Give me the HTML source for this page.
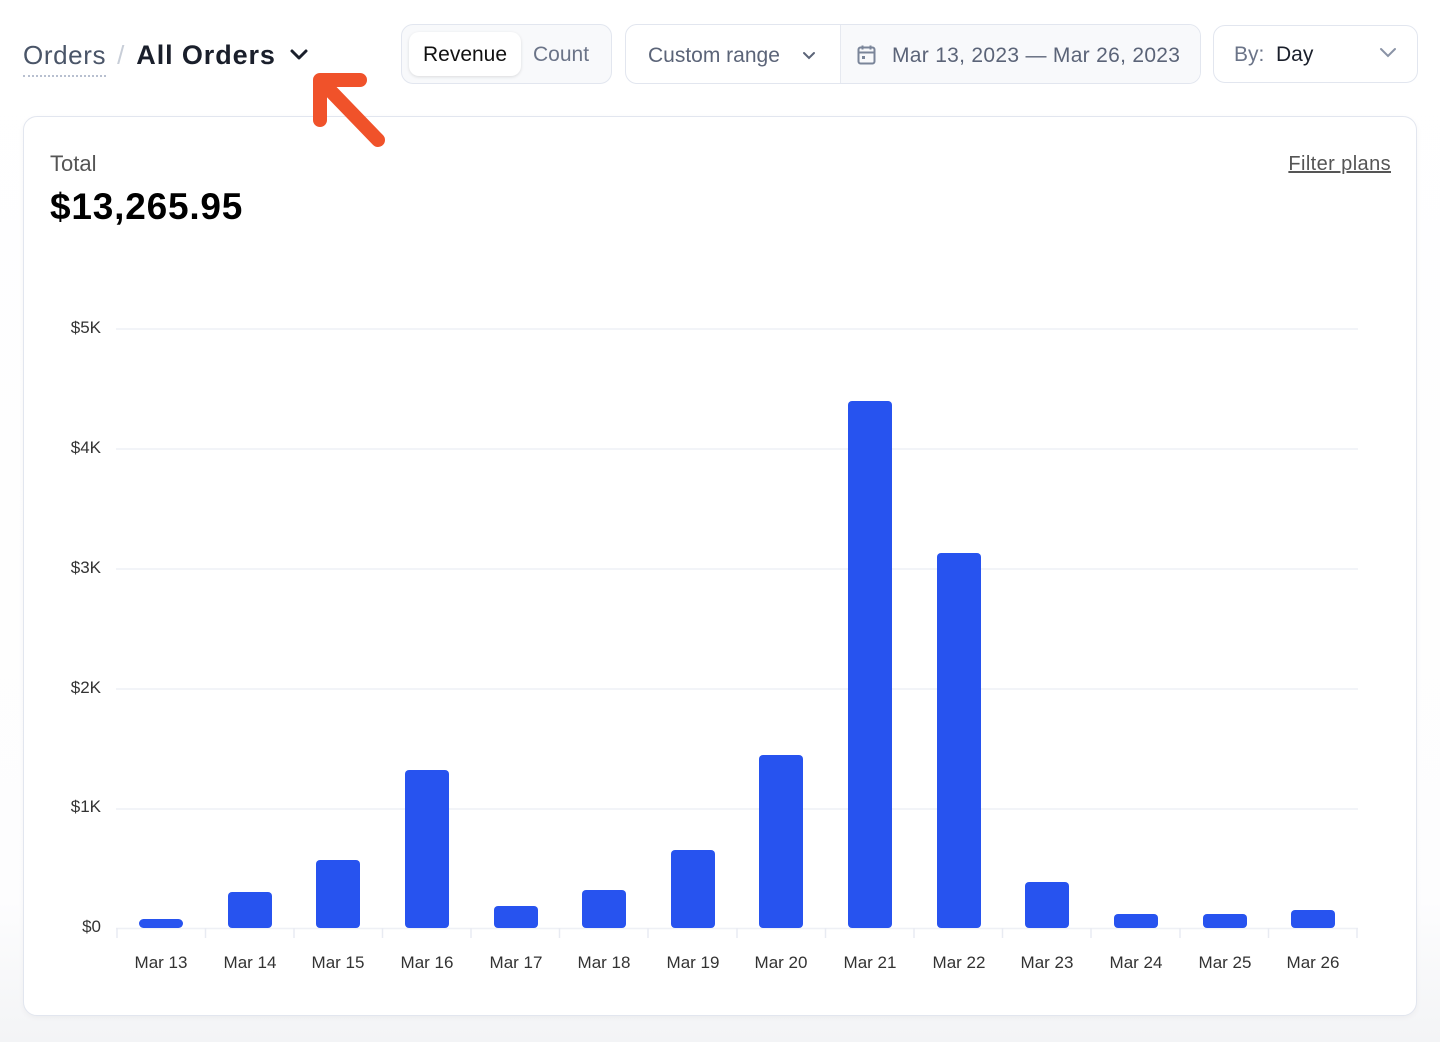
<!DOCTYPE html>
<html><head><meta charset="utf-8"><style>
*{box-sizing:border-box;margin:0;padding:0}
body{width:1440px;height:1042px;background:linear-gradient(#fff 0,#fdfdfe 900px,#f3f4f6 1042px);font-family:"Liberation Sans",sans-serif;position:relative;overflow:hidden}
.abs{position:absolute}
.crumb{left:23px;top:40px;font-size:26px;color:#4a5568;}
.box{border:1.5px solid #e2e6ef;border-radius:12px;background:#fff}
.seg{left:401px;top:24px;width:211px;height:60px;background:#f8f9fb}
.seg .on{position:absolute;left:7px;top:7px;width:112px;height:44px;background:#fff;border-radius:10px;box-shadow:0 1px 3px rgba(0,0,0,.12);font-size:21px;color:#111;text-align:center;line-height:46px}
.seg .off{position:absolute;left:131px;top:7px;line-height:46px;font-size:21px;color:#6b7488}
.range{left:625px;top:24px;width:576px;height:60px;overflow:hidden}
.by{left:1213px;top:25px;width:205px;height:58px}
.card{left:23px;top:116px;width:1394px;height:900px;border-radius:14px;box-shadow:0 2px 6px rgba(0,0,0,.04)}
</style></head><body>
<div class="abs crumb"><span style="border-bottom:2px dotted #b8c0d0;padding-bottom:5px;letter-spacing:0.6px">Orders</span><span style="color:#c8ced8;margin:0 12px 0 11px">/</span><b style="color:#1a1f2b;font-weight:bold;letter-spacing:0.9px;font-size:27px">All Orders</b></div>
<svg class="abs" style="left:289px;top:47px" width="20" height="16" viewBox="0 0 20 16"><path d="M3 4l7 7 7-7" fill="none" stroke="#1a1f2b" stroke-width="3" stroke-linecap="round" stroke-linejoin="round"/></svg>

<div class="abs box seg"><div class="on">Revenue</div><div class="off">Count</div></div>
<div class="abs box range">
  <div class="abs" style="left:22px;top:2px;line-height:58px;font-size:21px;color:#5b6478">Custom range</div>
  <svg class="abs" style="left:176px;top:25px" width="14" height="12"><path d="M2 3l5 5 5-5" fill="none" stroke="#5b6478" stroke-width="2" stroke-linecap="round"/></svg>
  <div class="abs" style="left:214px;top:0;width:362px;height:60px;background:#f8f9fb;border-left:1.5px solid #e6e9f0"></div>
  <svg class="abs" style="left:229px;top:18px" width="24" height="24" viewBox="0 0 24 24"><rect x="3.5" y="4.5" width="16" height="16" rx="2" fill="none" stroke="#7a8599" stroke-width="2"/><path d="M3.5 9.5h16M7.5 2.5v4M15.5 2.5v4" stroke="#7a8599" stroke-width="2"/><rect x="7" y="13" width="3" height="3" fill="#7a8599"/></svg>
  <div class="abs" style="left:266px;top:2px;line-height:58px;font-size:21px;color:#5b6478;letter-spacing:0.3px">Mar 13, 2023 — Mar 26, 2023</div>
</div>
<div class="abs box by">
  <div class="abs" style="left:20px;top:1px;line-height:56px;font-size:21px;color:#6b7488">By:&nbsp; <span style="color:#1a1f2b">Day</span></div>
  <svg class="abs" style="left:164px;top:20px" width="20" height="14"><path d="M3 3l7 7 7-7" fill="none" stroke="#8a93a6" stroke-width="2" stroke-linecap="round"/></svg>
</div>

<div class="abs box card">
  <div class="abs" style="left:26px;top:34px;font-size:22px;color:#555">Total</div>
  <div class="abs" style="left:26px;top:69px;font-size:37px;font-weight:bold;color:#000;letter-spacing:0.8px">$13,265.95</div>
  <div class="abs" style="right:25px;top:36px;font-size:20px;color:#555;text-decoration:underline;letter-spacing:0.4px">Filter plans</div>
</div>

<svg class="abs" style="left:300px;top:66px;z-index:5" width="100" height="90" viewBox="0 0 100 90"><path d="M20 54V14H60M22 16L78 74" fill="none" stroke="#f0522a" stroke-width="14" stroke-linecap="round" stroke-linejoin="round"/></svg>

<svg class="abs" style="left:0;top:0" width="1440" height="1042">
<g stroke="#eef0f5" stroke-width="1.5">
<line x1="116" y1="329" x2="1358" y2="329"/><line x1="116" y1="449" x2="1358" y2="449"/><line x1="116" y1="569" x2="1358" y2="569"/><line x1="116" y1="689" x2="1358" y2="689"/><line x1="116" y1="809" x2="1358" y2="809"/><line x1="116" y1="928.5" x2="1358" y2="928.5"/>
</g>
<g stroke="#e8ebf2" stroke-width="1.5">
<line x1="117" y1="928" x2="117" y2="938"/><line x1="205.5" y1="928" x2="205.5" y2="938"/><line x1="294" y1="928" x2="294" y2="938"/><line x1="382.5" y1="928" x2="382.5" y2="938"/><line x1="471" y1="928" x2="471" y2="938"/><line x1="559.5" y1="928" x2="559.5" y2="938"/><line x1="648" y1="928" x2="648" y2="938"/><line x1="737" y1="928" x2="737" y2="938"/><line x1="825.5" y1="928" x2="825.5" y2="938"/><line x1="914" y1="928" x2="914" y2="938"/><line x1="1002.5" y1="928" x2="1002.5" y2="938"/><line x1="1091" y1="928" x2="1091" y2="938"/><line x1="1180" y1="928" x2="1180" y2="938"/><line x1="1268.5" y1="928" x2="1268.5" y2="938"/><line x1="1357" y1="928" x2="1357" y2="938"/>
</g>
<g font-family="Liberation Sans, sans-serif" font-size="17" fill="#333" text-anchor="end">
<text x="101" y="333">$5K</text><text x="101" y="453">$4K</text><text x="101" y="573">$3K</text><text x="101" y="693">$2K</text><text x="101" y="812">$1K</text><text x="101" y="932">$0</text>
</g>
<g fill="#2753ef">
<rect x="139" y="919" width="44" height="9" rx="4.5"/>
<rect x="228" y="892" width="44" height="36" rx="4"/>
<rect x="316" y="860" width="44" height="68" rx="4"/>
<rect x="405" y="770" width="44" height="158" rx="4"/>
<rect x="494" y="906" width="44" height="22" rx="4"/>
<rect x="582" y="890" width="44" height="38" rx="4"/>
<rect x="671" y="850" width="44" height="78" rx="4"/>
<rect x="759" y="755" width="44" height="173" rx="4"/>
<rect x="848" y="401" width="44" height="527" rx="4"/>
<rect x="937" y="553" width="44" height="375" rx="4"/>
<rect x="1025" y="882" width="44" height="46" rx="4"/>
<rect x="1114" y="914" width="44" height="14" rx="4"/>
<rect x="1203" y="914" width="44" height="14" rx="4"/>
<rect x="1291" y="910" width="44" height="18" rx="4"/>
</g>
<g font-family="Liberation Sans, sans-serif" font-size="17" fill="#333" text-anchor="middle">
<text x="161" y="968">Mar 13</text><text x="250" y="968">Mar 14</text><text x="338" y="968">Mar 15</text><text x="427" y="968">Mar 16</text><text x="516" y="968">Mar 17</text><text x="604" y="968">Mar 18</text><text x="693" y="968">Mar 19</text><text x="781" y="968">Mar 20</text><text x="870" y="968">Mar 21</text><text x="959" y="968">Mar 22</text><text x="1047" y="968">Mar 23</text><text x="1136" y="968">Mar 24</text><text x="1225" y="968">Mar 25</text><text x="1313" y="968">Mar 26</text>
</g>
</svg>
</body></html>
